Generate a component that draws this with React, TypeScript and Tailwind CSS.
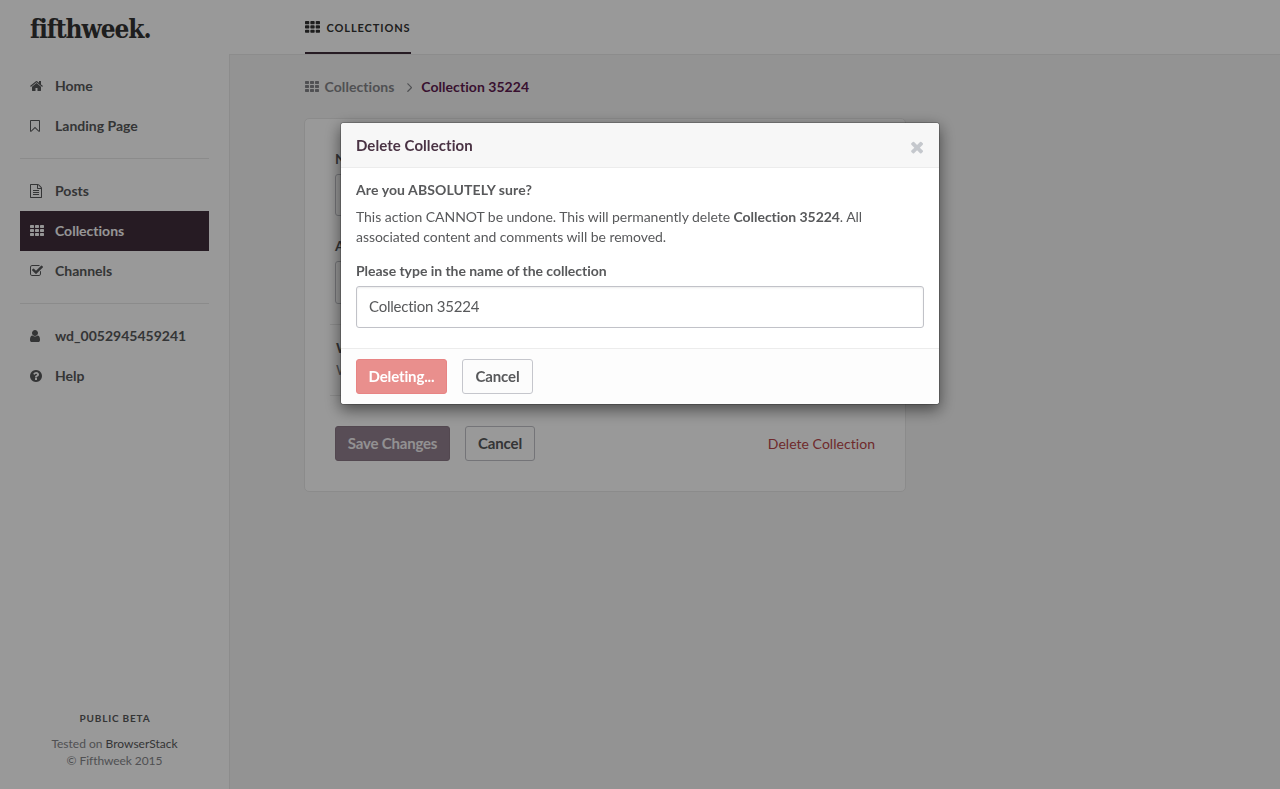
import React from "react";

type Glyph = { box: [number, number]; d: string };

const cell = (x: number, y: number) =>
  `M${x + 512} ${y + 96}v192q0 40-28 68t-68 28h-320q-40 0-68-28t-28-68v-192q0-40 28-68t68-28h320q40 0 68 28t28 68z`;

const glyphs: Record<string, Glyph> = {
  th: {
    box: [0, 1792],
    d: [128, 640, 1152].map((y) => [0, 640, 1280].map((x) => cell(x, y)).join("")).join(""),
  },
  home: {
    box: [64, 1664],
    d: "M1472 992v480q0 26-19 45t-45 19h-384v-384h-256v384h-384q-26 0-45-19t-19-45v-480q0-1 .5-3t.5-3l575-474 575 474q1 2 1 6zm223-69l-62 74q-8 9-21 11h-3q-13 0-21-7l-692-577-692 577q-12 8-24 7-13-2-21-11l-62-74q-8-10-7-23.5t11-21.5l719-599q32-26 76-26t76 26l244 204v-195q0-14 9-23t23-9h192q14 0 23 9t9 23v408l219 182q10 8 11 21.5t-7 23.5z",
  },
  bookmark: {
    box: [256, 1280],
    d: "M1408 256h-1024v1242l423-406 89-85 89 85 423 406v-1242zm12-128q23 0 44 9 33 13 52.5 41t19.5 62v1289q0 34-19.5 62t-52.5 41q-19 8-44 8-48 0-83-32l-441-424-441 424q-36 33-83 33-23 0-44-9-33-13-52.5-41t-19.5-62v-1289q0-34 19.5-62t52.5-41q21-9 44-9h1048z",
  },
  file: {
    box: [128, 1536],
    d: "M1596 380q28 28 48 76t20 88v1152q0 40-28 68t-68 28h-1344q-40 0-68-28t-28-68v-1600q0-40 28-68t68-28h896q40 0 88 20t76 48zm-444-244v376h376q-10-29-22-41l-313-313q-12-12-41-22zm384 1528v-1024h-416q-40 0-68-28t-28-68v-416h-768v1536h1280zm-1024-864q0-14 9-23t23-9h704q14 0 23 9t9 23v64q0 14-9 23t-23 9h-704q-14 0-23-9t-9-23v-64zm736 224q14 0 23 9t9 23v64q0 14-9 23t-23 9h-704q-14 0-23-9t-9-23v-64q0-14 9-23t23-9h704zm0 256q14 0 23 9t9 23v64q0 14-9 23t-23 9h-704q-14 0-23-9t-9-23v-64q0-14 9-23t23-9h704z",
  },
  check: {
    box: [64, 1664],
    d: "M1472 930v318q0 119-84.5 203.5t-203.5 84.5h-832q-119 0-203.5-84.5t-84.5-203.5v-832q0-119 84.5-203.5t203.5-84.5h832q63 0 117 25 15 7 18 23 3 17-9 29l-49 49q-10 10-23 10-3 0-9-2-23-6-45-6h-832q-66 0-113 47t-47 113v832q0 66 47 113t113 47h832q66 0 113-47t47-113v-254q0-13 9-22l64-64q10-10 23-10 6 0 12 3 20 8 20 29zm231-489l-814 814q-24 24-57 24t-57-24l-430-430q-24-24-24-57t24-57l110-110q24-24 57-24t57 24l263 263 647-647q24-24 57-24t57 24l110 110q24 24 24 57t-24 57z",
  },
  user: {
    box: [256, 1280],
    d: "M1536 1399q0 109-62.5 187t-150.5 78h-854q-88 0-150.5-78t-62.5-187q0-85 8.5-160.5t31.5-152 58.5-131 94-89 134.5-34.5q131 128 313 128t313-128q76 0 134.5 34.5t94 89 58.5 131 31.5 152 8.5 160.5zm-256-887q0 159-112.5 271.5t-271.5 112.5-271.5-112.5-112.5-271.5 112.5-271.5 271.5-112.5 271.5 112.5 112.5 271.5z",
  },
  help: {
    box: [128, 1536],
    d: "M1024 1376v-192q0-14-9-23t-23-9h-192q-14 0-23 9t-9 23v192q0 14 9 23t23 9h192q14 0 23-9t9-23zm256-672q0-88-55.5-163t-138.5-116-170-41q-243 0-371 213-15 24 8 42l132 100q7 6 19 6 16 0 25-12 53-68 86-92 34-24 86-24 48 0 85.5 26t37.5 59q0 38-20 61t-68 45q-63 28-115.5 86.5t-52.5 125.5v36q0 14 9 23t23 9h192q14 0 23-9t9-23q0-19 21.5-49.5t54.5-49.5q32-18 49-28.5t46-35 44.5-48 28-60.5 12.5-81zm384 192q0 209-103 385.5t-279.5 279.5-385.5 103-385.5-103-279.5-279.5-103-385.5 103-385.5 279.5-279.5 385.5-103 385.5 103 279.5 279.5 103 385.5z",
  },
  times: {
    box: [192, 1408],
    d: "M1490 1322q0 40-28 68l-136 136q-28 28-68 28t-68-28l-294-294-294 294q-28 28-68 28t-68-28l-136-136q-28-28-28-68t28-68l294-294-294-294q-28-28-28-68t28-68l136-136q28-28 68-28t68 28l294 294 294-294q28-28 68-28t68 28l136 136q28 28 28 68t-28 68l-294 294 294 294q28 28 28 68z",
  },
  angle: {
    box: [576, 640],
    d: "M1171 960q0 13-10 23l-466 466q-10 10-23 10t-23-10l-50-50q-10-10-10-23t10-23l393-393-393-393q-10-10-10-23t10-23l50-50q10-10 23-10t23 10l466 466q10 10 10 23z",
  },
};

function Icon({ name, size = 14, className = "" }: { name: string; size?: number; className?: string }) {
  const { box, d } = glyphs[name];
  return (
    <svg
      className={`shrink-0 ${className}`}
      width={(size * box[1]) / 1792}
      height={size}
      viewBox={`${box[0]} 0 ${box[1]} 1792`}
      fill="currentColor"
    >
      <path d={d} />
    </svg>
  );
}

function NavItem({ icon, label, active = false }: { icon: string; label: string; active?: boolean }) {
  return (
    <a
      className={`flex h-10 items-center pl-2.5 text-sm font-bold ${
        active ? "bg-[#402d3b] text-[#fafafa]" : "text-[#58595b]"
      }`}
    >
      <span className="flex w-[25px]">
        <Icon name={icon} />
      </span>
      {label}
    </a>
  );
}

function Sidebar() {
  return (
    <aside className="flex w-[229px] shrink-0 flex-col px-5">
      <div className="h-[66px] pt-[13px] pl-2.5">
        <span className="block font-['DejaVu_Serif_Condensed','DejaVu_Serif',serif] text-[26px] leading-8 font-bold tracking-[-1.05px] text-[#333]">
          fifthweek.
        </span>
      </div>
      <nav>
        <NavItem icon="home" label="Home" />
        <NavItem icon="bookmark" label="Landing Page" />
        <hr className="mt-3 mb-3 border-[#e8e8e8]" />
        <NavItem icon="file" label="Posts" />
        <NavItem icon="th" label="Collections" active />
        <NavItem icon="check" label="Channels" />
        <hr className="mt-3 mb-3 border-[#e8e8e8]" />
        <NavItem icon="user" label="wd_0052945459241" />
        <NavItem icon="help" label="Help" />
      </nav>
      <footer className="mt-auto pb-5 text-center text-xs leading-[17px] text-[#85868a]">
        <div className="mb-2 pl-px text-[10px] font-bold tracking-[0.8px] text-[#58595b]">PUBLIC BETA</div>
        <div>
          Tested on <span className="text-[#58595b]">BrowserStack</span>
        </div>
        <div className="tracking-[-0.07px]">© Fifthweek 2015</div>
      </footer>
    </aside>
  );
}

function CollectionForm() {
  return (
    <section className="h-[374px] w-[602px] rounded-[5px] border border-[#e8e8e8] bg-white px-[30px] pt-[30px] text-sm leading-5 text-[#58595b]">
      <label className="block font-bold">N</label>
      <div className="mt-[5px] h-[42px] rounded-[3px] border border-[#c1c2c8]" />
      <label className="mt-5 block font-bold">A</label>
      <div className="mt-[5px] h-[43px] rounded-[3px] border border-[#c1c2c8]" />
      <div className="-mx-[5px] mt-5 h-[72px] border-y border-[#e8e8e8] px-1.5 pt-[13px]">
        <div className="font-bold">W</div>
        <div className="mt-0.5 text-[#808185]">W</div>
      </div>
      <div className="mt-[30px] flex items-center">
        <button className="h-[35px] w-[115px] rounded-[3px] border border-[#8a7886] bg-[#93808f] pb-0.5 text-[15px] font-bold tracking-[-0.18px] text-[#f4f2f4]">
          Save Changes
        </button>
        <button className="ml-[15px] h-[35px] w-[70px] rounded-[3px] border border-[#c1c2c8] pb-0.5 text-[15px] font-bold tracking-[-0.15px]">
          Cancel
        </button>
        <a className="ml-auto tracking-[0.04px] text-[#b9474a]">Delete Collection</a>
      </div>
    </section>
  );
}

function DeleteDialog() {
  return (
    <div className="fixed inset-0 flex items-start justify-center bg-black/40 pt-[122px]">
      <div className="w-[600px] rounded-[4px] border border-black/20 bg-white bg-clip-padding text-sm leading-5 text-[#58595b] shadow-[0_5px_15px_rgba(0,0,0,0.5)]">
        <header className="flex h-[45px] items-center justify-between rounded-t-[3px] border-b border-[#ececec] bg-[#f7f7f7] px-[15px]">
          <h4 className="text-[15px] font-bold tracking-[0.06px] text-[#4a3344]">Delete Collection</h4>
          <Icon name="times" size={18} className="mt-[3px] text-[#c5c8cd]" />
        </header>
        <div className="h-[180px] px-[15px] pt-3">
          <p className="font-bold tracking-[0.1px]">Are you ABSOLUTELY sure?</p>
          <p className="mt-[7px] tracking-[-0.045px]">
            This action CANNOT be undone. This will permanently delete <b>Collection 35224</b>. All
            associated content and comments will be removed.
          </p>
          <label className="mt-3.5 block font-bold tracking-[-0.04px]">
            Please type in the name of the collection
          </label>
          <div className="mt-[5px] flex h-[42px] items-center rounded-[3px] border border-[#c1c2c8] px-3 pb-0.5 text-[15px] tracking-[-0.22px] shadow-[inset_0_1px_2px_rgba(0,0,0,0.08)]">
            Collection 35224
          </div>
        </div>
        <footer className="flex h-14 gap-[15px] rounded-b-[3px] border-t border-[#ececec] bg-[#fdfdfd] px-[15px] pt-2.5 text-[15px] font-bold tracking-[-0.15px]">
          <button className="h-[35px] w-[91px] rounded-[3px] border border-[#e88484] bg-[#e98f8d] pb-0.5 text-white">
            Deleting...
          </button>
          <button className="h-[35px] w-[71px] rounded-[3px] border border-[#c5c6cc] bg-[#fcfcfc] pb-0.5">
            Cancel
          </button>
        </footer>
      </div>
    </div>
  );
}

export default function App() {
  return (
    <div className="flex h-[789px] overflow-hidden bg-white font-['Lato',sans-serif] [font-variant-ligatures:no-common-ligatures]">
      <Sidebar />
      <div className="flex flex-1 flex-col">
        <header className="flex h-[54px] pl-[76px]">
          <a className="flex h-[54px] items-center border-b-2 border-[#402d3b] pt-[3px] text-[11px] font-bold tracking-[0.9px] text-[#333]">
            <Icon name="th" size={15} className="mr-[6.5px]" />
            <span className="pt-0.5">COLLECTIONS</span>
          </a>
        </header>
        <main className="flex-1 border-t border-l border-[#e9e9e9] bg-[#f5f5f5] pl-[74px]">
          <div className="flex h-[63px] items-center pl-px text-sm font-bold text-[#85868a]">
            <Icon name="th" className="mr-[5.5px]" />
            <span className="tracking-[0.08px]">Collections</span>
            <Icon name="angle" size={16} className="mr-[9px] ml-3" />
            <span className="tracking-[0.05px] text-[#5f1c50]">Collection 35224</span>
          </div>
          <CollectionForm />
        </main>
      </div>
      <DeleteDialog />
    </div>
  );
}
